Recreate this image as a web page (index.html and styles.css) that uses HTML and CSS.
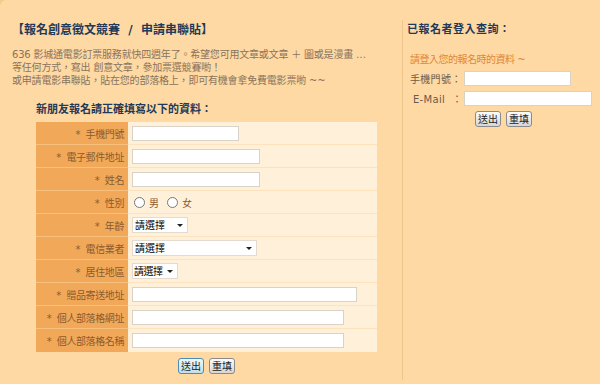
FILE: index.html
```html
<!DOCTYPE html>
<html lang="zh-Hant">
<head>
    <meta charset="UTF-8">
    <meta name="viewport" content="width=device-width, initial-scale=1.0">
    <title>報名創意徵文競賽</title>
    <link rel="stylesheet" href="styles.css">
</head>
<body>
    <div class="page">
        <div class="main">
            <h1 class="title">【報名創意徵文競賽 &nbsp;/ &nbsp;申請串聯貼】</h1>
            <p class="intro">636 影城通電影訂票服務就快四週年了。希望您可用文章或文章 ＋ 圖或是漫畫 …<br>等任何方式，寫出 創意文章，參加票選競賽喲！<br>或申請電影串聯貼，貼在您的部落格上，即可有機會拿免費電影票喲 ~~</p>

            <h2 class="form-title">新朋友報名請正確填寫以下的資料：</h2>

            <div class="signup">
                <div class="row">
                    <label class="cell-label">* &nbsp;手機門號</label>
                    <div class="cell-field"><input class="txt w107" type="text"></div>
                </div>
                <div class="row">
                    <label class="cell-label">* &nbsp;電子郵件地址</label>
                    <div class="cell-field"><input class="txt w128" type="text"></div>
                </div>
                <div class="row">
                    <label class="cell-label">* &nbsp;姓名</label>
                    <div class="cell-field"><input class="txt w128" type="text"></div>
                </div>
                <div class="row">
                    <label class="cell-label">* &nbsp;性別</label>
                    <div class="cell-field">
                        <input class="radio" type="radio" name="sex"><span class="opt">男</span>
                        <input class="radio" type="radio" name="sex"><span class="opt">女</span>
                    </div>
                </div>
                <div class="row">
                    <label class="cell-label">* &nbsp;年齡</label>
                    <div class="cell-field"><span class="sel w56"><select><option>請選擇</option></select></span></div>
                </div>
                <div class="row">
                    <label class="cell-label">* &nbsp;電信業者</label>
                    <div class="cell-field"><span class="sel w125"><select><option>請選擇</option></select></span></div>
                </div>
                <div class="row">
                    <label class="cell-label">* &nbsp;居住地區</label>
                    <div class="cell-field"><span class="sel w46"><select><option>請選擇</option></select></span></div>
                </div>
                <div class="row">
                    <label class="cell-label">* &nbsp;贈品寄送地址</label>
                    <div class="cell-field"><input class="txt w225" type="text"></div>
                </div>
                <div class="row">
                    <label class="cell-label">* &nbsp;個人部落格網址</label>
                    <div class="cell-field"><input class="txt w212" type="text"></div>
                </div>
                <div class="row">
                    <label class="cell-label">* &nbsp;個人部落格名稱</label>
                    <div class="cell-field"><input class="txt w212" type="text"></div>
                </div>
            </div>

            <div class="actions">
                <button class="btn btn-default">送出</button>
                <button class="btn">重填</button>
            </div>
        </div>

        <div class="side">
            <h2 class="side-title">已報名者登入查詢：</h2>
            <p class="hint">請登入您的報名時的資料 ~</p>
            <div class="login-row">
                <label class="login-label">手機門號：</label>
                <input class="txt w107" type="text">
            </div>
            <div class="login-row">
                <label class="login-label mail">E-Mail &nbsp;：</label>
                <input class="txt w128" type="text">
            </div>
            <div class="side-actions">
                <button class="btn">送出</button>
                <button class="btn">重填</button>
            </div>
        </div>
    </div>
</body>
</html>
```

FILE: styles.css
```css
html {
    background: #f5c98c;
}
body {
    margin: 0;
    font-family: "DejaVu Sans", "Noto Sans CJK TC", sans-serif;
    font-size: 10px;
}
.page {
    display: flex;
    width: 600px;
    height: 384px;
    background: #fed9a3;
    border-top-left-radius: 6px;
}
.main {
    width: 402px;
    padding-left: 12px;
    box-sizing: border-box;
}
.title {
    margin: 23px 0 0;
    font-size: 12px;
    line-height: 14px;
    font-weight: bold;
    color: #1f3a5a;
}
.intro {
    margin: 11px 0 0;
    font-size: 10px;
    line-height: 13px;
    letter-spacing: -0.2px;
    color: #8a735c;
}
.form-title {
    margin: 16px 0 0 24px;
    font-size: 11px;
    line-height: 14px;
    font-weight: bold;
    color: #1f3a5a;
}
.signup {
    width: 341px;
    margin: 5px 0 0 24px;
}
.row {
    display: flex;
    height: 23px;
}
.cell-label {
    width: 92px;
    padding-right: 4px;
    box-sizing: border-box;
    background: #f1a959;
    border-bottom: 1px solid #f7c07c;
    color: #8b5a2e;
    font-size: 10px;
    letter-spacing: -0.4px;
    display: flex;
    align-items: center;
    justify-content: flex-end;
    white-space: nowrap;
}
.cell-field {
    flex: 1;
    padding-left: 4px;
    background: #fff0d9;
    border-bottom: 1px solid #fde2bd;
    display: flex;
    align-items: center;
}
.row:last-child .cell-label,
.row:last-child .cell-field {
    border-bottom: none;
}
.txt {
    height: 15px;
    box-sizing: border-box;
    margin: 0;
    padding: 0 2px;
    border: 1px solid #d9d2c6;
    background: white;
    font-size: 10px;
}
.w107 { width: 107px; }
.w128 { width: 128px; }
.w212 { width: 212px; }
.w225 { width: 225px; }
.radio {
    width: 11px;
    height: 11px;
    margin: 0 4px 0 2px;
}
.opt {
    color: #8b5a2e;
    margin-right: 6px;
}
.sel {
    position: relative;
    display: inline-block;
    height: 16px;
}
.sel select {
    appearance: none;
    -webkit-appearance: none;
    width: 100%;
    height: 16px;
    margin: 0;
    padding: 0 2px;
    border: 1px solid #e3dbcf;
    background: white;
    color: black;
    font-family: "DejaVu Sans", "Noto Sans CJK TC", sans-serif;
    font-size: 10px;
}
.sel::after {
    content: "";
    position: absolute;
    right: 5px;
    top: 7px;
    border-left: 3px solid transparent;
    border-right: 3px solid transparent;
    border-top: 3px solid #222;
}
.w46 { width: 46px; }
.w56 { width: 56px; }
.w125 { width: 125px; }
.w46 select {
    letter-spacing: -0.5px;
    padding-left: 1px;
}
.actions {
    width: 341px;
    margin: 6px 0 0 24px;
    display: flex;
    justify-content: center;
    gap: 5px;
}
.btn {
    width: 26px;
    height: 16px;
    padding: 0;
    border: 1px solid #8a8a8a;
    border-radius: 3px;
    background: linear-gradient(#fbfbfb, #d6d6d6);
    color: #222;
    font-family: "Noto Sans CJK TC", sans-serif;
    font-size: 10px;
    line-height: 14px;
}
.btn-default {
    border-color: #4f8cb2;
    background: linear-gradient(#eef8fc, #c3dfea);
}
.side {
    flex: 1;
    margin: 20px 0 4px;
    padding-left: 4px;
    border-left: 1px solid #eec68c;
}
.side-title {
    margin: 3px 0 0;
    font-size: 11px;
    line-height: 14px;
    letter-spacing: 0.5px;
    font-weight: bold;
    color: #1f3a5a;
}
.hint {
    margin: 16px 0 0 3px;
    line-height: 13px;
    color: #e0873a;
    letter-spacing: -0.5px;
}
.login-row {
    display: flex;
    align-items: center;
    height: 15px;
    margin: 5px 0 0 3px;
}
.login-row + .login-row {
    margin-top: 5px;
}
.login-label {
    width: 54px;
    color: #6d5a48;
    letter-spacing: 0.3px;
    white-space: nowrap;
}
.login-label.mail {
    padding-left: 3px;
    width: 51px;
    letter-spacing: 0.3px;
}
.side-actions {
    display: flex;
    justify-content: center;
    gap: 5px;
    margin-top: 5px;
}
```
